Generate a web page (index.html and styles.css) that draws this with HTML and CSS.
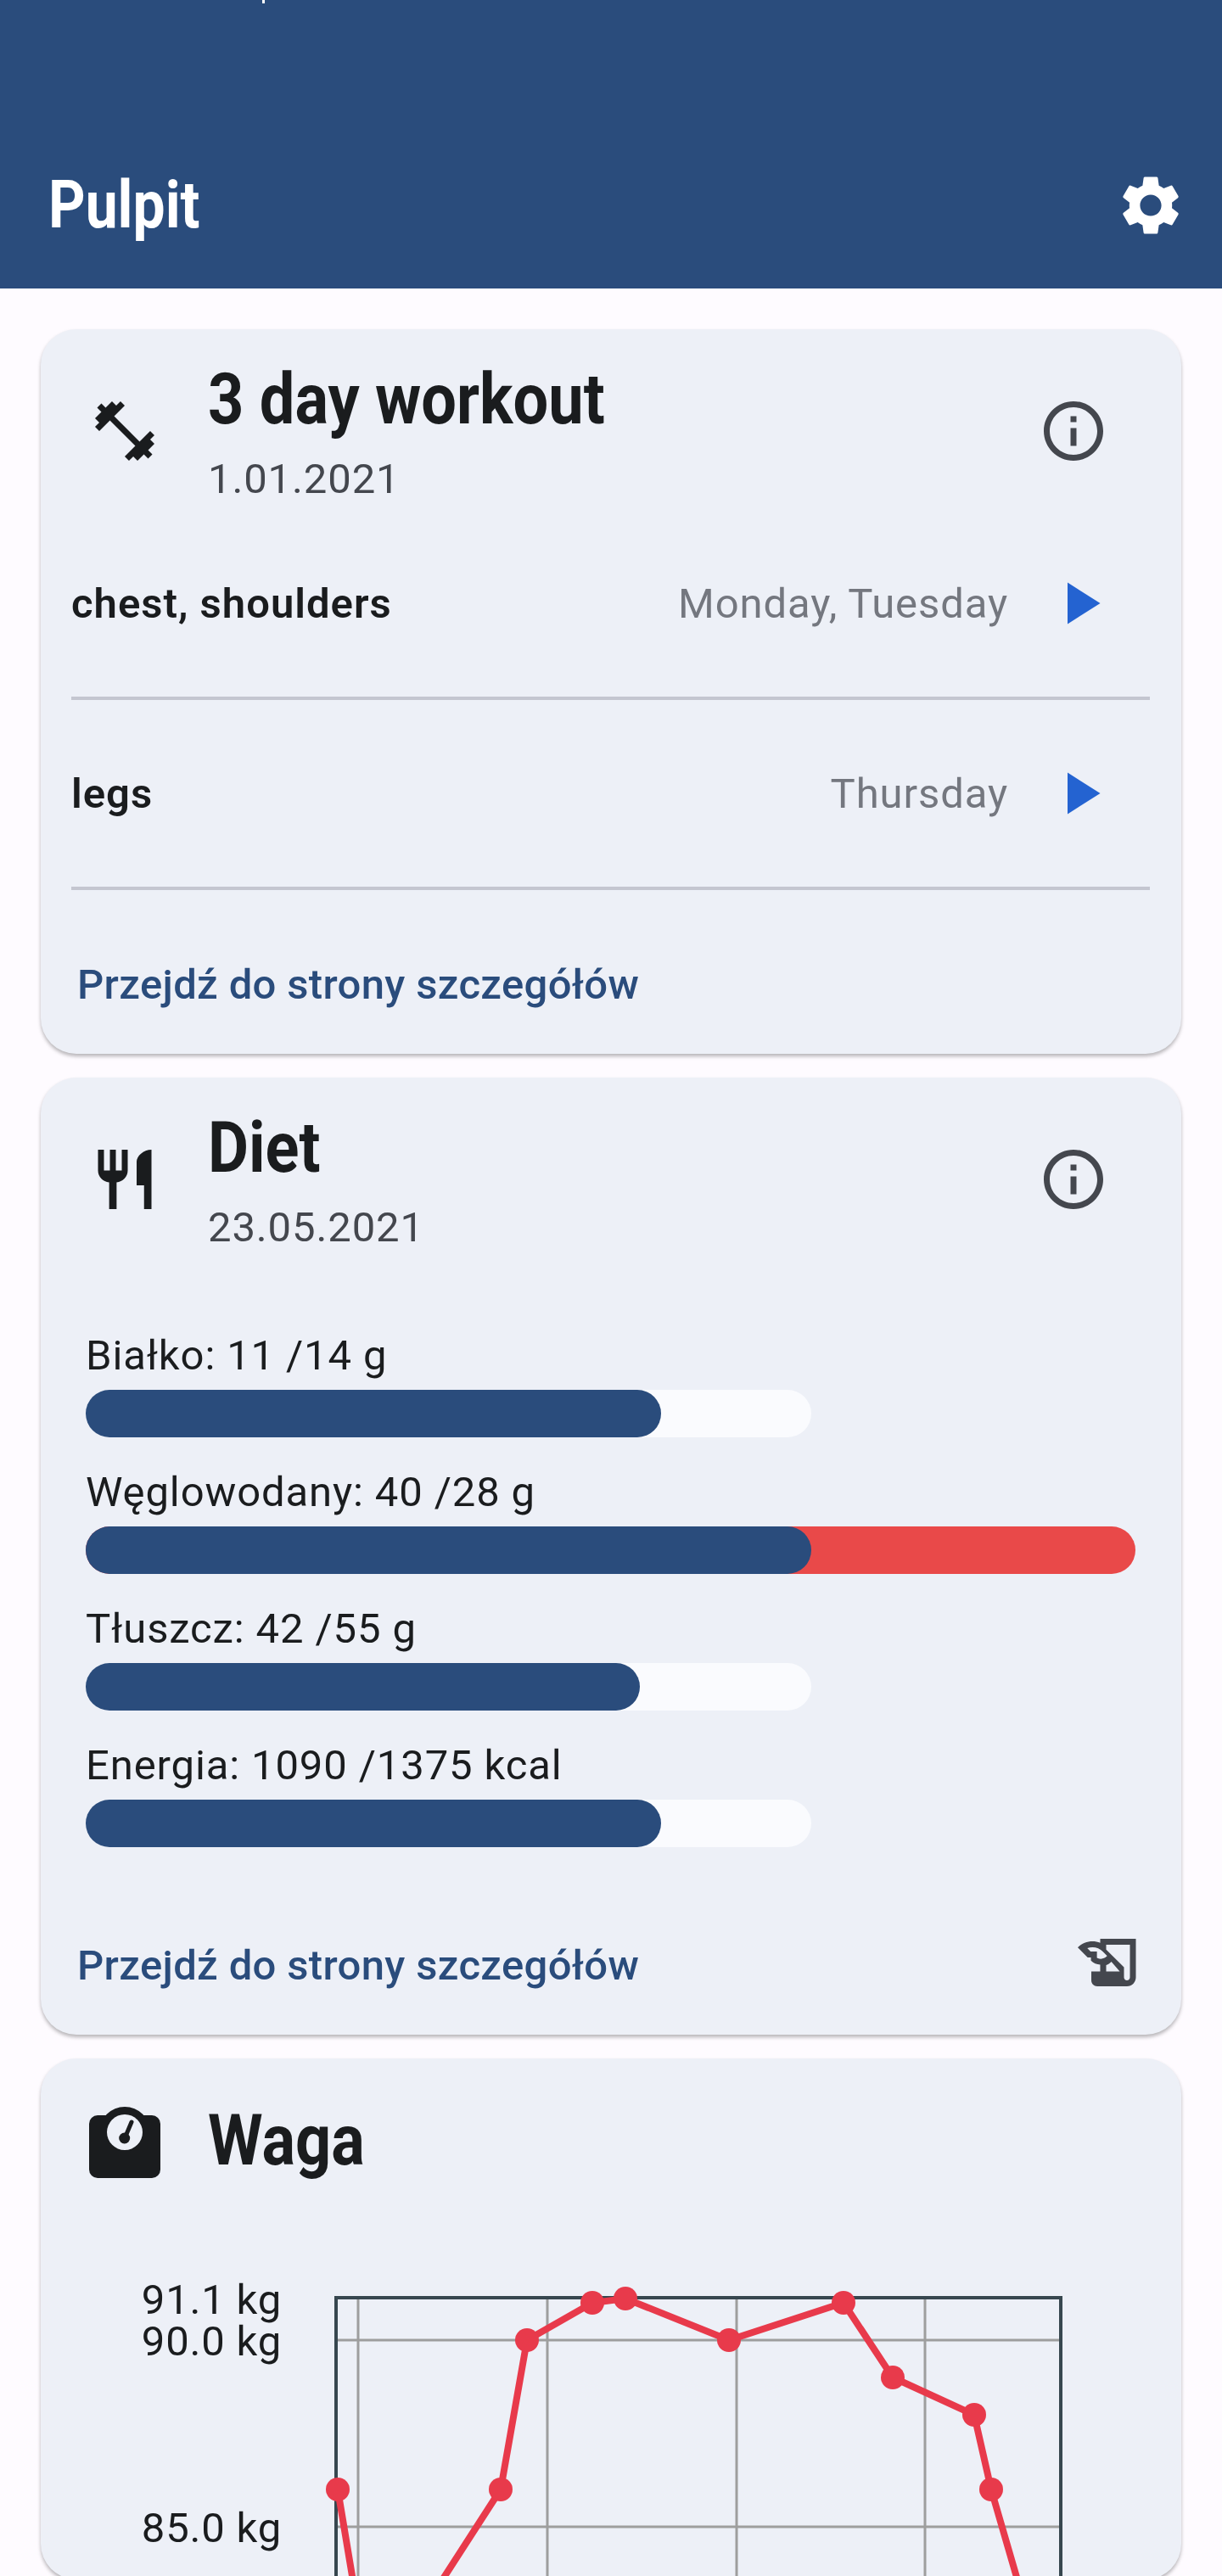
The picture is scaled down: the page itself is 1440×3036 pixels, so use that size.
FILE: index.html
```html
<!DOCTYPE html>
<html lang="en">
<head>
    <meta charset="UTF-8">
    <meta name="viewport" content="width=device-width, initial-scale=1.0">
    <title>Pulpit</title>
    <link rel="stylesheet" href="styles.css">
</head>
<body>

<div class="page">
    <header class="app-bar">
        <span class="status-mark"></span>
        <h1 class="app-title"><span class="narrow">Pulpit</span></h1>
        <svg class="icon icon-settings" viewBox="0 0 24 24"><path d="M19.14 12.94c.04-.3.06-.61.06-.94 0-.32-.02-.64-.07-.94l2.03-1.58c.18-.14.23-.41.12-.61l-1.92-3.32c-.12-.22-.37-.29-.59-.22l-2.39.96c-.5-.38-1.03-.7-1.62-.94l-.36-2.54c-.04-.24-.24-.41-.48-.41h-3.84c-.24 0-.43.17-.47.41l-.36 2.54c-.59.24-1.13.57-1.62.94l-2.39-.96c-.22-.08-.47 0-.59.22L2.74 8.87c-.12.21-.08.47.12.61l2.03 1.58c-.05.3-.09.63-.09.94s.02.64.07.94l-2.03 1.58c-.18.14-.23.41-.12.61l1.92 3.32c.12.22.37.29.59.22l2.39-.96c.5.38 1.03.7 1.62.94l.36 2.54c.05.24.24.41.48.41h3.84c.24 0 .44-.17.47-.41l.36-2.54c.59-.24 1.13-.56 1.62-.94l2.39.96c.22.08.47 0 .59-.22l1.92-3.32c.12-.22.07-.47-.12-.61l-2.01-1.58zM12 15.6c-1.98 0-3.6-1.62-3.6-3.6s1.62-3.6 3.6-3.6 3.6 1.62 3.6 3.6-1.62 3.6-3.6 3.6z"/></svg>
    </header>

    <main class="cards">
        <!-- Workout plan -->
        <section class="card">
            <div class="card-head">
                <svg class="icon" viewBox="0 0 24 24"><path d="M20.57 14.86L22 13.43 20.57 12 17 15.57 8.43 7 12 3.43 10.57 2 9.14 3.43 7.71 2 5.57 4.14 4.14 2.71 2.71 4.14l1.43 1.43L2 7.71l1.43 1.43L2 10.57 3.43 12 7 8.43 15.57 17 12 20.57 13.43 22l1.43-1.43L16.29 22l2.14-2.14 1.43 1.43 1.43-1.43-1.43-1.43L22 16.29z"/></svg>
                <div class="head-text">
                    <h2 class="card-title"><span class="narrow">3 day workout</span></h2>
                    <p class="card-date">1.01.2021</p>
                </div>
                <svg class="icon icon-info" viewBox="0 0 24 24"><path d="M11 7h2v2h-2zm0 4h2v6h-2zm1-9C6.48 2 2 6.48 2 12s4.48 10 10 10 10-4.48 10-10S17.52 2 12 2zm0 18c-4.41 0-8-3.59-8-8s3.59-8 8-8 8 3.59 8 8-3.59 8-8 8z"/></svg>
            </div>
            <div class="plan-list">
                <div class="plan-row">
                    <span class="plan-name">chest, shoulders</span>
                    <span class="plan-days">Monday, Tuesday</span>
                    <svg class="icon icon-play" viewBox="0 0 24 24"><path d="M8 5v14l11-7z"/></svg>
                </div>
                <div class="plan-row">
                    <span class="plan-name">legs</span>
                    <span class="plan-days">Thursday</span>
                    <svg class="icon icon-play" viewBox="0 0 24 24"><path d="M8 5v14l11-7z"/></svg>
                </div>
            </div>
            <div class="card-foot card-foot-plan">
                <a class="detail-link">Przejdź do strony szczegółów</a>
            </div>
        </section>

        <!-- Diet -->
        <section class="card">
            <div class="card-head">
                <svg class="icon" viewBox="0 0 24 24"><path d="M11 9H9V2H7v7H5V2H3v7c0 2.12 1.66 3.84 3.75 3.97V22h2.5v-9.03C11.34 12.84 13 11.12 13 9V2h-2v7zm5-3v8h2.5v8H21V2c-2.76 0-5 2.24-5 4z"/></svg>
                <div class="head-text">
                    <h2 class="card-title"><span class="narrow">Diet</span></h2>
                    <p class="card-date">23.05.2021</p>
                </div>
                <svg class="icon icon-info" viewBox="0 0 24 24"><path d="M11 7h2v2h-2zm0 4h2v6h-2zm1-9C6.48 2 2 6.48 2 12s4.48 10 10 10 10-4.48 10-10S17.52 2 12 2zm0 18c-4.41 0-8-3.59-8-8s3.59-8 8-8 8 3.59 8 8-3.59 8-8 8z"/></svg>
            </div>
            <div class="macro-list">
                <div class="macro">
                    <p class="macro-label">Białko: 11 /14 g</p>
                    <div class="macro-bar"><div class="macro-fill" style="width: 678px"></div></div>
                </div>
                <div class="macro">
                    <p class="macro-label">Węglowodany: 40 /28 g</p>
                    <div class="macro-bar macro-bar-over" style="width: 1237px"><div class="macro-fill" style="width: 855px"></div></div>
                </div>
                <div class="macro">
                    <p class="macro-label">Tłuszcz: 42 /55 g</p>
                    <div class="macro-bar"><div class="macro-fill" style="width: 653px"></div></div>
                </div>
                <div class="macro">
                    <p class="macro-label">Energia: 1090 /1375 kcal</p>
                    <div class="macro-bar"><div class="macro-fill" style="width: 678px"></div></div>
                </div>
            </div>
            <div class="card-foot card-foot-diet">
                <a class="detail-link">Przejdź do strony szczegółów</a>
                <svg class="icon icon-note" viewBox="0 0 24 24"><path d="M9 4v1.38c-.83-.33-1.72-.5-2.61-.5-1.79 0-3.58.68-4.95 2.05l3.33 3.33h1.11v1.11c.86.86 1.98 1.31 3.11 1.36V15H6v3c0 1.1.9 2 2 2h10c1.66 0 3-1.34 3-3V4H9zm-1.11 6.41V8.26H5.74L4.65 7.17c.55-.19 1.13-.29 1.74-.29 1.34 0 2.59.52 3.54 1.46l1.41 1.41-.2.2c-.51.51-1.19.8-1.92.8-.68 0-1.32-.25-1.82-.71zM19 17c0 .55-.45 1-1 1s-1-.45-1-1v-2h-6v-2.17c.57-.16 1.1-.46 1.54-.9l.2-.2L15.58 15H17v-1.42l-6-5.97V6h8v11z"/></svg>
            </div>
        </section>

        <!-- Weight chart -->
        <section class="card">
            <div class="card-head card-head-weight">
                <svg class="icon" viewBox="0 0 84 84">
                    <circle cx="42" cy="30" r="30"/>
                    <rect x="0" y="10" width="84" height="74" rx="10"/>
                    <circle class="dial" cx="42" cy="30" r="21"/>
                    <circle cx="41.7" cy="37" r="6.5"/>
                    <line class="dial-needle" x1="42" y1="37" x2="50" y2="18"/>
                </svg>
                <h2 class="card-title"><span class="narrow">Waga</span></h2>
            </div>
            <svg class="chart" viewBox="48 2660 1344 380">
                <text class="chart-label" x="332" y="2727">91.1 kg</text>
                <text class="chart-label" x="332" y="2776">90.0 kg</text>
                <text class="chart-label" x="332" y="2996">85.0 kg</text>

                <!-- grid -->
                <path class="chart-grid" d="M422 2708V3040M645 2708V3040M868 2708V3040M1090 2708V3040M396 2758H1250M396 2978H1250"/>
                <path class="chart-frame" d="M396 3040V2708H1250V3040"/>

                <!-- series -->
                <polyline class="chart-line" points="398,2934 415,3036 420,3070"/>
                <polyline class="chart-line" points="510,3058 590,2934 621,2758 698,2714 737,2709 859,2758 994,2714 1052,2802 1148,2846 1168,2934 1204,3058"/>
                <g class="chart-dots">
                    <circle cx="398" cy="2934" r="14"/>
                    <circle cx="590" cy="2934" r="14"/>
                    <circle cx="621" cy="2758" r="14"/>
                    <circle cx="698" cy="2714" r="14"/>
                    <circle cx="737" cy="2709" r="14"/>
                    <circle cx="859" cy="2758" r="14"/>
                    <circle cx="994" cy="2714" r="14"/>
                    <circle cx="1052" cy="2802" r="14"/>
                    <circle cx="1148" cy="2846" r="14"/>
                    <circle cx="1168" cy="2934" r="14"/>
                </g>
            </svg>
        </section>
    </main>
</div>

</body>
</html>
```

FILE: styles.css
```css
* {
    box-sizing: border-box;
}
body {
    margin: 0;
    background-color: #fefbff;
    color: #1a1c1e;
    font-family: Roboto, "Liberation Sans", sans-serif;
}
h1, h2, p {
    margin: 0;
}
.page {
    height: 3036px;
    overflow: hidden;
}

/* condensed headings: no condensed family installed */
.narrow {
    display: inline-block;
    transform: scaleX(0.88);
    transform-origin: left center;
}

.icon {
    display: block;
    flex: none;
    width: 84px;
    height: 84px;
    fill: #1a1c1e;
}

.app-bar {
    position: relative;
    display: flex;
    align-items: center;
    justify-content: space-between;
    height: 340px;
    padding: 144px 42px 0 57px;
    background-color: #2a4c7c;
    color: #fff;
}
.status-mark {
    position: absolute;
    left: 309px;
    top: 0;
    width: 3px;
    height: 4px;
    background-color: #fff;
}
.app-title {
    font-size: 77px;
    font-weight: 700;
    line-height: 90px;
}
.icon-settings {
    fill: #fff;
}

.cards {
    display: flex;
    flex-direction: column;
    gap: 28px;
    padding: 48px 48px 0;
}
.card {
    background-color: #edf0f7;
    border-radius: 42px;
    box-shadow: 0 3px 4px rgba(0, 0, 0, 0.28);
}

.card-head {
    display: flex;
    align-items: center;
    gap: 56px;
    height: 172px;
    margin-top: 34px;
    padding: 0 85px 0 57px;
}
.card-head-weight {
    height: 104px;
    margin-top: 47px;
}
.card-head-weight .card-title {
    margin-top: -4px;
}
.head-text {
    flex: 1;
}
.card-title {
    font-size: 84px;
    font-weight: 700;
    line-height: 100px;
}
.card-date {
    margin-top: 14px;
    font-size: 49px;
    line-height: 60px;
    letter-spacing: 0.875px;
    color: #44474e;
}
.icon-info {
    fill: #44474e;
}

.plan-list {
    margin: 7px 37px 0 36px;
}
.plan-row {
    display: flex;
    align-items: center;
    height: 224px;
    border-bottom: 4px solid #c4c6d0;
}
.plan-name {
    flex: 1;
    font-size: 49px;
    font-weight: 600;
    letter-spacing: 1px;
}
.plan-days {
    font-size: 49px;
    letter-spacing: 0.9px;
    color: #74777f;
}
.icon-play {
    margin: 0 41px 0 42px;
    fill: #2463d1;
}

.card-foot {
    display: flex;
    align-items: center;
    justify-content: space-between;
    height: 84px;
    margin-bottom: 43px;
    padding: 0 43px 0 43px;
}
.card-foot-plan {
    margin-top: 66px;
}
.card-foot-diet {
    margin-top: 94px;
}
.detail-link {
    padding-top: 6px;
    font-size: 49px;
    font-weight: 500;
    letter-spacing: 0.35px;
    color: #2a4c7c;
}
.icon-note {
    fill: #44474e;
}

.macro-list {
    display: flex;
    flex-direction: column;
    gap: 35px;
    margin-top: 92px;
    padding-left: 53px;
}
.macro-label {
    margin-bottom: 10px;
    font-size: 49px;
    line-height: 60px;
    letter-spacing: 0.875px;
}
.macro-bar {
    width: 855px;
    height: 56px;
    border-radius: 28px;
    background-color: #fafbfe;
}
.macro-bar-over {
    background-color: #e94949;
}
.macro-fill {
    height: 56px;
    border-radius: 28px;
    background-color: #2a4c7c;
}

/* chart is a free canvas, coordinates are plotted values */
.chart {
    display: block;
    width: 1344px;
    height: 380px;
    margin-top: 83px;
}
.chart-label {
    font-family: Roboto, "Liberation Sans", sans-serif;
    font-size: 49px;
    letter-spacing: 0.8px;
    text-anchor: end;
    fill: #1a1c1e;
}
.chart-grid {
    fill: none;
    stroke: #9e9e9e;
    stroke-width: 3;
}
.chart-frame {
    fill: none;
    stroke: #37474f;
    stroke-width: 4;
}
.chart-line {
    fill: none;
    stroke: #e83a4b;
    stroke-width: 8;
}
.chart-dots {
    fill: #e83a4b;
}
.dial {
    fill: #edf0f7;
}
.dial-needle {
    stroke: #1a1c1e;
    stroke-width: 5;
    stroke-linecap: round;
}
```
